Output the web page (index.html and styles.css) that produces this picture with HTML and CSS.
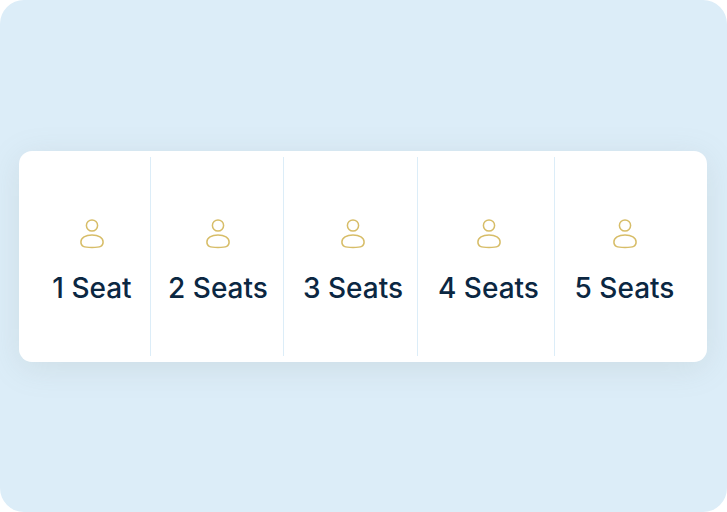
FILE: index.html
```html
<!DOCTYPE html>
<html lang="en">
<head>
<meta charset="utf-8">
<meta name="viewport" content="width=device-width, initial-scale=1">
<title>Seats</title>
<link rel="stylesheet" href="styles.css">
</head>
<body>
<svg class="sprite" aria-hidden="true">
  <symbol id="person" viewBox="0 0 26 32">
    <circle cx="13" cy="7.5" r="5.600"/>
    <path d="M13 17C6.500 17 1.900 19.800 1.900 24C1.900 28.400 4.500 29.400 13 29.400C21.500 29.400 24.100 28.400 24.100 24C24.100 19.800 19.500 17 13 17Z"/>
  </symbol>
</svg>
<main class="stage">
  <div class="seats" role="group" aria-label="Number of seats">
    <button class="seat" type="button"><svg class="icon" aria-hidden="true"><use href="#person"/></svg><span>1 Seat</span></button>
    <button class="seat" type="button"><svg class="icon" aria-hidden="true"><use href="#person"/></svg><span>2 Seats</span></button>
    <button class="seat seat-inset" type="button"><svg class="icon" aria-hidden="true"><use href="#person"/></svg><span>3 Seats</span></button>
    <button class="seat seat-inset" type="button"><svg class="icon" aria-hidden="true"><use href="#person"/></svg><span>4 Seats</span></button>
    <button class="seat" type="button"><svg class="icon" aria-hidden="true"><use href="#person"/></svg><span>5 Seats</span></button>
  </div>
</main>
</body>
</html>
```
FILE: styles.css
```css
* {
  box-sizing: border-box;
}

body {
  margin: 0;
  background: #fff;
  font-family: Inter, "Liberation Sans", sans-serif;
}

.sprite {
  display: none;
}

.stage {
  display: flex;
  align-items: center;
  min-height: 100vh;
  padding: 21px 20px 20px 19px;
  border-radius: 24px;
  background: #dcedf8;
}

.seats {
  flex: 1;
  display: grid;
  grid-template-columns: 119fr 133fr 134fr 137fr 139fr;
  padding: 6px 13px;
  border-radius: 13px;
  background: #fff;
  box-shadow: 0 6px 32px rgba(130, 145, 135, 0.16);
}

.seat {
  display: flex;
  flex-direction: column;
  align-items: center;
  gap: 20px;
  padding: 61px 0 50px 2px;
  border: 0;
  border-right: 1px solid #dcedf8;
  background: none;
  color: #0b2742;
  font: 500 28px/36px Inter, "Liberation Sans", sans-serif;
  white-space: nowrap;
}

.seat-inset {
  padding-left: 5px;
}

.seat:last-child {
  padding-left: 0;
  border-right: 0;
}

.icon {
  width: 26px;
  height: 32px;
  fill: none;
  stroke: #d7bd68;
  stroke-width: 1.5px;
}
```
